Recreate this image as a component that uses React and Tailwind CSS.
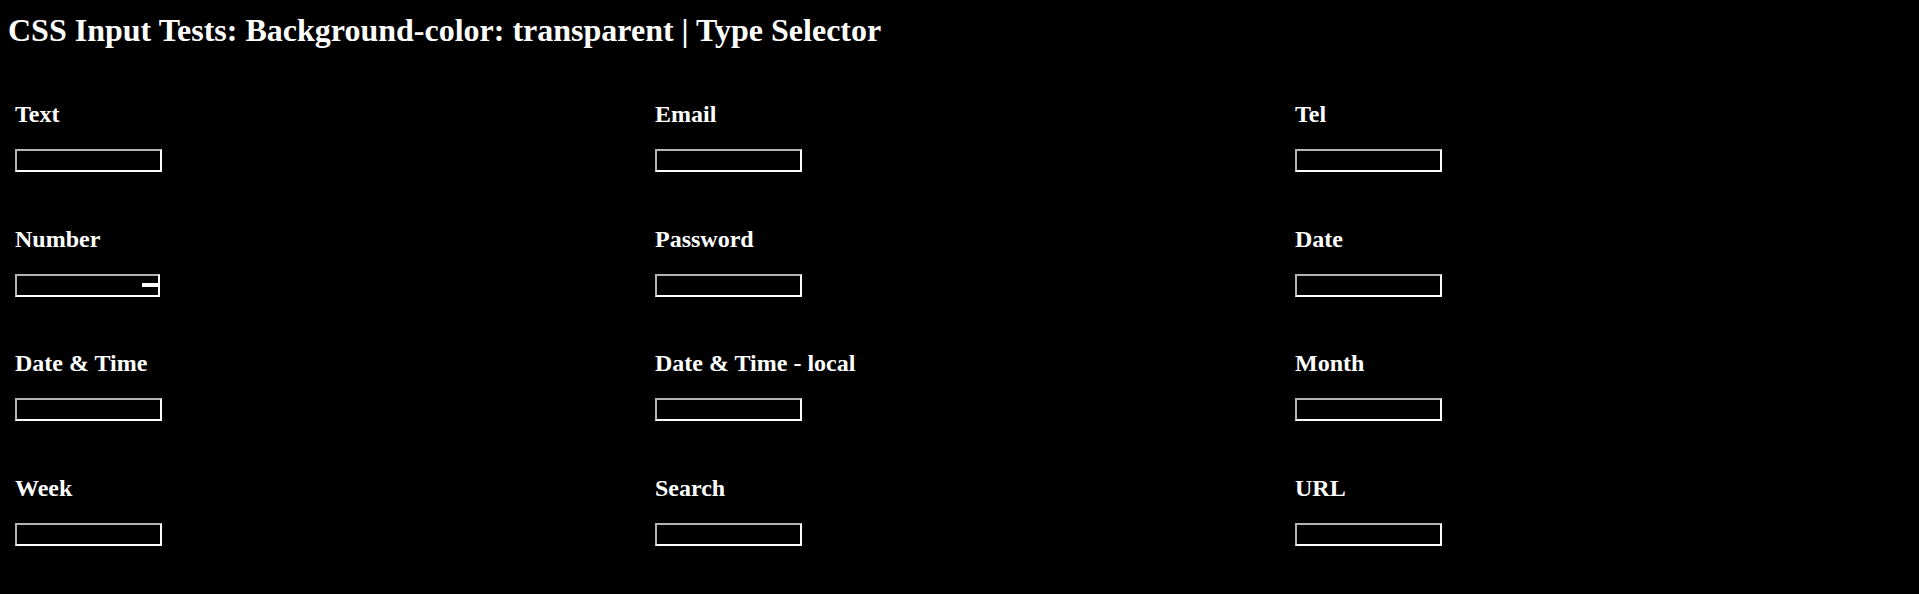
import React from "react";

const fields = [
  ["Text", "text"],
  ["Email", "email"],
  ["Tel", "tel"],
  ["Number", "number"],
  ["Password", "password"],
  ["Date", "date"],
  ["Date & Time", "dt"],
  ["Date & Time - local", "dtl"],
  ["Month", "month"],
  ["Week", "week"],
  ["Search", "search"],
  ["URL", "url"],
];

const boxCls =
  "block h-[23px] border-2 border-solid border-t-[#b4b4b4] border-l-[#b4b4b4] border-b-white border-r-white bg-transparent";

export default function App() {
  return (
    <div
      className="min-h-[594px] w-full bg-black p-2 text-white"
      style={{ fontFamily: '"Liberation Serif", "Times New Roman", serif' }}
    >
      <h1 className="mt-[4px] text-[32px] font-bold leading-[37px]">
        CSS Input Tests: Background-color: transparent | Type Selector
      </h1>
      <div className="mt-[50px] grid grid-cols-[640px_640px_1fr] gap-y-[51.67px] pl-[7px]">
        {fields.map(([label, type]) => (
          <div key={label} className="flex flex-col">
            <h2 className="mt-[1px] h-[28px] text-[24px] font-bold leading-[28px]">{label}</h2>
            <div className="mt-[21px]">
              {type === "number" ? (
                <div className={boxCls + " flex w-[145px] items-start justify-end"}>
                  <span className="mt-[7px] block h-[4px] w-[16px] bg-white" />
                </div>
              ) : (
                <div className={boxCls + " w-[147px]"} />
              )}
            </div>
          </div>
        ))}
      </div>
    </div>
  );
}
